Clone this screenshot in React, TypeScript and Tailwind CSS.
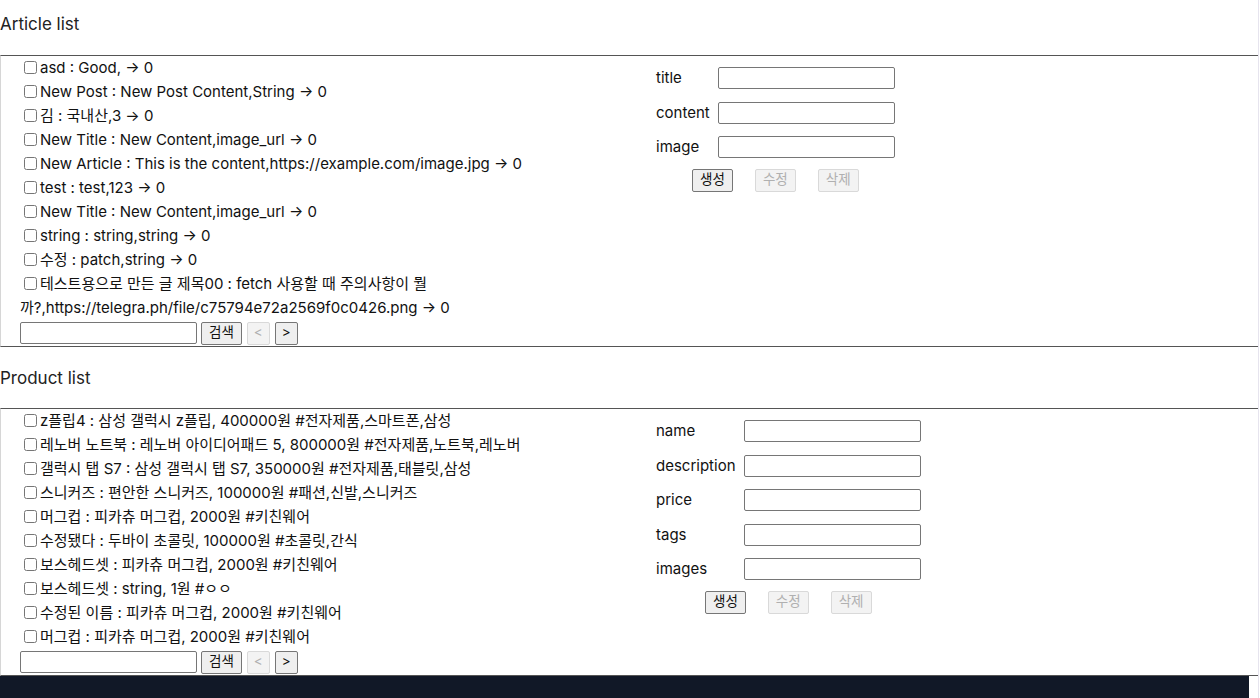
import React from "react";

const articles = [
  "asd : Good, → 0",
  "New Post : New Post Content,String → 0",
  "김 : 국내산,3 → 0",
  "New Title : New Content,image_url → 0",
  "New Article : This is the content,https://example.com/image.jpg → 0",
  "test : test,123 → 0",
  "New Title : New Content,image_url → 0",
  "string : string,string → 0",
  "수정 : patch,string → 0",
  "테스트용으로 만든 글 제목00 : fetch 사용할 때 주의사항이 뭘까?,https://telegra.ph/file/c75794e72a2569f0c0426.png → 0",
];

const products = [
  "z플립4 : 삼성 갤럭시 z플립, 400000원 #전자제품,스마트폰,삼성",
  "레노버 노트북 : 레노버 아이디어패드 5, 800000원 #전자제품,노트북,레노버",
  "갤럭시 탭 S7 : 삼성 갤럭시 탭 S7, 350000원 #전자제품,태블릿,삼성",
  "스니커즈 : 편안한 스니커즈, 100000원 #패션,신발,스니커즈",
  "머그컵 : 피카츄 머그컵, 2000원 #키친웨어",
  "수정됐다 : 두바이 초콜릿, 100000원 #초콜릿,간식",
  "보스헤드셋 : 피카츄 머그컵, 2000원 #키친웨어",
  "보스헤드셋 : string, 1원 #ㅇㅇ",
  "수정된 이름 : 피카츄 머그컵, 2000원 #키친웨어",
  "머그컵 : 피카츄 머그컵, 2000원 #키친웨어",
];

function Btn({ label, disabled, small }: { label: string; disabled?: boolean; small?: boolean }) {
  const pad = small ? "px-[6px]" : "px-[7px]";
  return (
    <button
      type="button"
      disabled={disabled}
      className={
        disabled
          ? `h-[23px] ${pad} border border-[#d9d9d9] bg-[#f3f3f3] text-[#b0b0b0] rounded-[2px] text-[13.5px] leading-none`
          : `h-[23px] ${pad} border border-[#767676] bg-[#efefef] text-[#111] rounded-[2px] text-[13.5px] leading-none`
      }
    >
      {label}
    </button>
  );
}

function ItemList({ items }: { items: string[] }) {
  return (
    <div className="w-[655px] pl-[19px] shrink-0">
      <ul>
        {items.map((t, i) => (
          <li key={i} className="leading-[24px]">
            <input
              type="checkbox"
              className="ml-[4px] mr-[3px] my-0 w-[13px] h-[13px] align-[-1px]"
            />
            {t}
          </li>
        ))}
      </ul>
      <div className="flex items-center h-[26px] gap-[4px]">
        <input className="w-[177px] h-[22px] border border-[#767676] rounded-[2px] px-1" />
        <Btn label="검색" />
        <div className="flex items-center gap-[5px] ml-px">
          <Btn label="<" disabled small />
          <Btn label=">" small />
        </div>
      </div>
    </div>
  );
}

function Form({ fields }: { fields: string[] }) {
  return (
    <div className="pt-[11px]">
      <div className="w-fit">
        <div className="grid grid-cols-[auto_177px] gap-x-[8px] gap-y-[12px] items-center">
          {fields.map((f) => (
            <React.Fragment key={f}>
              <span>{f}</span>
              <input className="w-[177px] h-[22px] border border-[#767676] rounded-[2px] px-1" />
            </React.Fragment>
          ))}
        </div>
        <div className="flex justify-center gap-[22px] mt-[10px]">
          <Btn label="생성" />
          <Btn label="수정" disabled />
          <Btn label="삭제" disabled />
        </div>
      </div>
    </div>
  );
}

function Section({
  title,
  items,
  fields,
  header,
}: {
  title: string;
  items: string[];
  fields: string[];
  header: string;
}) {
  return (
    <section>
      <div className={header}>
        <h2 className="text-[17px] leading-[22px] font-normal text-[#222]">{title}</h2>
      </div>
      <div className="flex border-t border-b border-l border-t-[#555] border-b-[#555] border-l-[#d6d6d6]">
        <ItemList items={items} />
        <Form fields={fields} />
      </div>
    </section>
  );
}

export default function App() {
  return (
    <div
      className="w-[1259px] min-h-[698px] bg-white border-r border-[#e6e4ee] text-[15px] text-[#111]"
      style={{ fontFamily: 'Inter, "Noto Sans CJK KR", sans-serif' }}
    >
      <Section
        title="Article list"
        items={articles}
        fields={["title", "content", "image"]}
        header="h-[55px] pt-[13px]"
      />
      <Section
        title="Product list"
        items={products}
        fields={["name", "description", "price", "tags", "images"]}
        header="h-[62px] pt-[21px] -mt-px"
      />
      <footer className="w-[1249px] h-[60px] bg-[#111827]" />
    </div>
  );
}
